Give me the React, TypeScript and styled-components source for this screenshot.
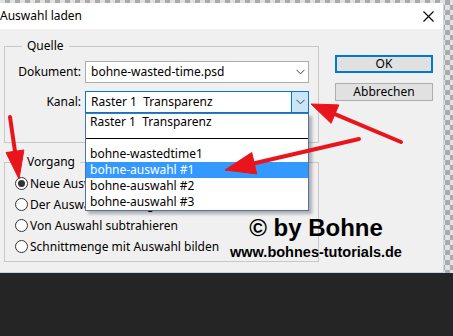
import React from "react";
import styled, { createGlobalStyle } from "styled-components";

const Global = createGlobalStyle`
  html, body { margin: 0; padding: 0; background: #252525; }
  body {
    width: 453px; height: 336px; overflow: hidden;
    font-family: "Noto Sans", "DejaVu Sans", sans-serif;
  }
  * { box-sizing: border-box; }
`;

const Page = styled.div`
  position: relative;
  width: 453px;
  height: 336px;
  background: #252525;
  overflow: hidden;
`;

const Backdrop = styled.div`
  display: flex;
  height: 273px;
  padding: 3px 9px 0 0;
  background-color: #e2e2e2;
  background-image: conic-gradient(#ababab 25%, transparent 0 50%, #ababab 0 75%, transparent 0);
  background-size: 10px 10px;
`;

const Dialog = styled.div`
  flex: 1;
  display: flex;
  flex-direction: column;
  background: #f0f0f0;
  border-right: 1px solid #c6d4e3;
  border-bottom: 1px solid #c6d4e3;
`;

const TitleBar = styled.div`
  height: 26px;
  flex: none;
  display: flex;
  align-items: center;
  justify-content: space-between;
  padding: 0 9px 0 0;
  background: #ffffff;
`;

const Title = styled.span`
  font-size: 12px;
  line-height: 16px;
  color: #000;
`;

const Body = styled.div`
  flex: 1;
  display: flex;
  padding: 9px 0 0 4px;
`;

const LeftCol = styled.div`
  width: 315px;
  display: flex;
  flex-direction: column;
  gap: 11px;
`;

const Group = styled.fieldset`
  margin: 0;
  padding: 0;
  min-width: 0;
  border: 1px solid #c8c8c8;
`;

const Legend = styled.legend`
  margin-left: 17px;
  padding: 0 5px;
  font-size: 12px;
  line-height: 16px;
  color: #000;
`;

const QuelleBody = styled.div`
  display: flex;
  flex-direction: column;
  gap: 8px;
  padding: 7px 0 29px 0;
`;

const FormRow = styled.div`
  display: flex;
  align-items: center;
  height: 22px;
`;

const Label = styled.span`
  width: 76px;
  padding-right: 0;
  margin-right: 4px;
  text-align: right;
  font-size: 12px;
  line-height: 16px;
  color: #000;
`;

const Combo = styled.div<{ $focused?: boolean }>`
  position: relative;
  width: 224px;
  height: 22px;
  display: flex;
  align-items: stretch;
  background: #fff;
  border: 1px solid ${(p) => (p.$focused ? "#0078d7" : "#acacac")};
`;

const ComboText = styled.span`
  flex: 1;
  padding-left: 5px;
  font-size: 12px;
  line-height: 20px;
  color: #000;
  white-space: pre;
`;

const ComboButton = styled.span<{ $focused?: boolean }>`
  width: 17px;
  display: flex;
  align-items: center;
  justify-content: center;
  background: ${(p) => (p.$focused ? "#cce4f7" : "transparent")};
  border-left: 1px solid ${(p) => (p.$focused ? "#0078d7" : "transparent")};
`;

const DropList = styled.ul`
  position: absolute;
  top: 21px;
  left: -1px;
  width: 224px;
  margin: 0;
  padding: 0;
  list-style: none;
  background: #fff;
  border: 1px solid #4c74a6;
  box-shadow: 3px 3px 3px rgba(0, 0, 0, 0.28);
  z-index: 5;
`;

const Item = styled.li<{ $selected?: boolean }>`
  height: 16px;
  padding-left: 4px;
  font-size: 12px;
  line-height: 16px;
  white-space: pre;
  color: ${(p) => (p.$selected ? "#fff" : "#000")};
  background: ${(p) => (p.$selected ? "#3399ff" : "transparent")};
`;

const SeparatorItem = styled.li`
  height: 16px;
  display: flex;
  align-items: center;
  &::after {
    content: "";
    flex: 1;
    height: 1px;
    background: #000;
  }
`;

const VorgangBody = styled.div`
  display: flex;
  flex-direction: column;
  padding: 3px 0 4px 10px;
`;

const RadioRow = styled.label`
  height: 21px;
  display: flex;
  align-items: center;
  gap: 2px;
  font-size: 12px;
  line-height: 16px;
  color: #000;
  white-space: nowrap;
`;

const RadioCircle = styled.span<{ $checked?: boolean }>`
  width: 13px;
  height: 13px;
  flex: none;
  border-radius: 50%;
  border: 1px solid #333;
  background: #fff;
  display: flex;
  align-items: center;
  justify-content: center;
  &::after {
    content: "";
    width: 7px;
    height: 7px;
    border-radius: 50%;
    background: ${(p) => (p.$checked ? "#333" : "transparent")};
  }
`;

const RightCol = styled.div`
  display: flex;
  flex-direction: column;
  gap: 10px;
  padding-top: 17px;
  margin-left: 16px;
`;

const Button = styled.div<{ $default?: boolean }>`
  width: 98px;
  height: 18px;
  display: flex;
  align-items: center;
  justify-content: center;
  font-size: 12px;
  line-height: 16px;
  color: #000;
  background: #e1e1e1;
  border: ${(p) => (p.$default ? "2px solid #0078d7" : "1px solid #adadad")};
`;

const Watermark = styled.div`
  position: absolute;
  left: 229px;
  top: 216px;
  width: 174px;
  display: flex;
  flex-direction: column;
  align-items: center;
  font-family: "Liberation Sans", Arial, sans-serif;
  font-weight: bold;
  color: #000;
  z-index: 8;
`;

const WatermarkBig = styled.span`
  font-size: 24px;
  line-height: 24px;
  white-space: nowrap;
`;

const WatermarkSmall = styled.span`
  font-size: 14.5px;
  line-height: 16px;
  margin-top: 4px;
  white-space: nowrap;
`;

const ArrowLayer = styled.svg`
  position: absolute;
  left: 0;
  top: 0;
  pointer-events: none;
  z-index: 10;
`;

const Chevron = () => (
  <svg width="9" height="6" viewBox="0 0 9 6">
    <polyline points="0.5,0.8 4.5,4.8 8.5,0.8" fill="none" stroke="#444" strokeWidth="1" />
  </svg>
);

const CloseIcon = () => (
  <svg width="11" height="11" viewBox="0 0 11 11">
    <path d="M0.5 0.5 L10.5 10.5 M10.5 0.5 L0.5 10.5" stroke="#000" strokeWidth="1.1" />
  </svg>
);

function Arrow({ x1, y1, x2, y2, hl, hw, sw }: { x1: number; y1: number; x2: number; y2: number; hl: number; hw: number; sw: number }) {
  const dx = x2 - x1;
  const dy = y2 - y1;
  const L = Math.hypot(dx, dy);
  const ux = dx / L;
  const uy = dy / L;
  const bx = x2 - ux * hl;
  const by = y2 - uy * hl;
  const px = -uy;
  const py = ux;
  const pts = `${x2},${y2} ${bx + (px * hw) / 2},${by + (py * hw) / 2} ${bx - (px * hw) / 2},${by - (py * hw) / 2}`;
  return (
    <g fill="#e8151c" stroke="#e8151c">
      <line x1={x1} y1={y1} x2={bx + ux * 2} y2={by + uy * 2} strokeWidth={sw} strokeLinecap="round" />
      <polygon points={pts} strokeWidth="1" strokeLinejoin="round" />
    </g>
  );
}

const listItems = ["Raster 1  Transparenz", "", "bohne-wastedtime1", "bohne-auswahl #1", "bohne-auswahl #2", "bohne-auswahl #3"];

export default function App() {
  return (
    <>
      <Global />
      <Page>
        <Backdrop>
          <Dialog>
            <TitleBar>
              <Title>Auswahl laden</Title>
              <CloseIcon />
            </TitleBar>
            <Body>
              <LeftCol>
                <Group>
                  <Legend>Quelle</Legend>
                  <QuelleBody>
                    <FormRow>
                      <Label>Dokument:</Label>
                      <Combo>
                        <ComboText>bohne-wasted-time.psd</ComboText>
                        <ComboButton>
                          <Chevron />
                        </ComboButton>
                      </Combo>
                    </FormRow>
                    <FormRow>
                      <Label>Kanal:</Label>
                      <Combo $focused>
                        <ComboText>Raster 1  Transparenz</ComboText>
                        <ComboButton $focused>
                          <Chevron />
                        </ComboButton>
                        <DropList>
                          {listItems.map((t, i) =>
                            t === "" ? (
                              <SeparatorItem key={i} />
                            ) : (
                              <Item key={i} $selected={i === 3}>
                                {t}
                              </Item>
                            )
                          )}
                        </DropList>
                      </Combo>
                    </FormRow>
                  </QuelleBody>
                </Group>
                <Group>
                  <Legend>Vorgang</Legend>
                  <VorgangBody>
                    <RadioRow>
                      <RadioCircle $checked />
                      Neue Auswahl
                    </RadioRow>
                    <RadioRow>
                      <RadioCircle />
                      Der Auswahl hinzufügen
                    </RadioRow>
                    <RadioRow>
                      <RadioCircle />
                      Von Auswahl subtrahieren
                    </RadioRow>
                    <RadioRow>
                      <RadioCircle />
                      Schnittmenge mit Auswahl bilden
                    </RadioRow>
                  </VorgangBody>
                </Group>
              </LeftCol>
              <RightCol>
                <Button $default>OK</Button>
                <Button>Abbrechen</Button>
              </RightCol>
            </Body>
          </Dialog>
        </Backdrop>
        <Watermark>
          <WatermarkBig>© by Bohne</WatermarkBig>
          <WatermarkSmall>www.bohnes-tutorials.de</WatermarkSmall>
        </Watermark>
        <ArrowLayer width={453} height={336} viewBox="0 0 453 336">
          <Arrow x1={401} y1={142} x2={311} y2={104} hl={26} hw={20} sw={4} />
          <Arrow x1={359} y1={139} x2={225} y2={170} hl={30} hw={22} sw={4} />
          <Arrow x1={10} y1={117} x2={19} y2={179} hl={28} hw={18} sw={4} />
        </ArrowLayer>
      </Page>
    </>
  );
}
